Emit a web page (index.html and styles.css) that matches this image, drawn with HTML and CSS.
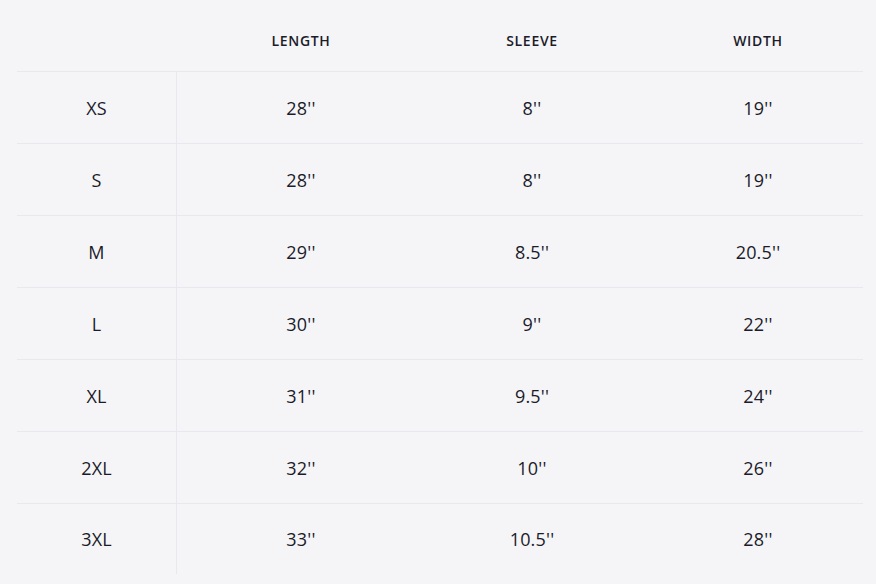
FILE: index.html
```
<!DOCTYPE html>
<html>
<head>
<meta charset="utf-8">
<link rel="stylesheet" href="styles.css">
</head>
<body>
<div class="chart">
  <div class="row head">
    <div class="cell size"></div>
    <div class="cell c2">LENGTH</div>
    <div class="cell c3">SLEEVE</div>
    <div class="cell c4">WIDTH</div>
  </div>
  <div class="row"><div class="cell size">XS</div><div class="cell c2">28''</div><div class="cell c3">8''</div><div class="cell c4">19''</div></div>
  <div class="row"><div class="cell size">S</div><div class="cell c2">28''</div><div class="cell c3">8''</div><div class="cell c4">19''</div></div>
  <div class="row"><div class="cell size">M</div><div class="cell c2">29''</div><div class="cell c3">8.5''</div><div class="cell c4">20.5''</div></div>
  <div class="row"><div class="cell size">L</div><div class="cell c2">30''</div><div class="cell c3">9''</div><div class="cell c4">22''</div></div>
  <div class="row"><div class="cell size">XL</div><div class="cell c2">31''</div><div class="cell c3">9.5''</div><div class="cell c4">24''</div></div>
  <div class="row"><div class="cell size">2XL</div><div class="cell c2">32''</div><div class="cell c3">10''</div><div class="cell c4">26''</div></div>
  <div class="row last"><div class="cell size">3XL</div><div class="cell c2">33''</div><div class="cell c3">10.5''</div><div class="cell c4">28''</div></div>
</div>
</body>
</html>
```

FILE: styles.css
```
html, body {
  margin: 0;
  padding: 0;
  background: #f5f5f8;
}
body {
  font-family: "Open Sans", "Noto Sans", sans-serif;
  color: #1b1b29;
  width: 876px;
  height: 584px;
}
.chart {
  margin: 0 13px 0 17px;
  display: flex;
  flex-direction: column;
}
.row {
  display: grid;
  grid-template-columns: 160px 248px 214px 224px;
  height: 71px;
  border-top: 1px solid #e8e8ee;
}
.row.head {
  border-top: none;
}
.row.last {
  height: 70px;
}
.cell {
  display: flex;
  align-items: center;
  justify-content: center;
  font-size: 18px;
  font-weight: 400;
  letter-spacing: 0.2px;
}
.row.head .cell {
  padding-top: 9px;
  font-size: 14px;
  font-weight: 600;
  letter-spacing: 0.7px;
}
.row:not(.head) .size {
  border-right: 1px solid #e8e8ee;
}
.c4 {
  padding-left: 14px;
}
```
